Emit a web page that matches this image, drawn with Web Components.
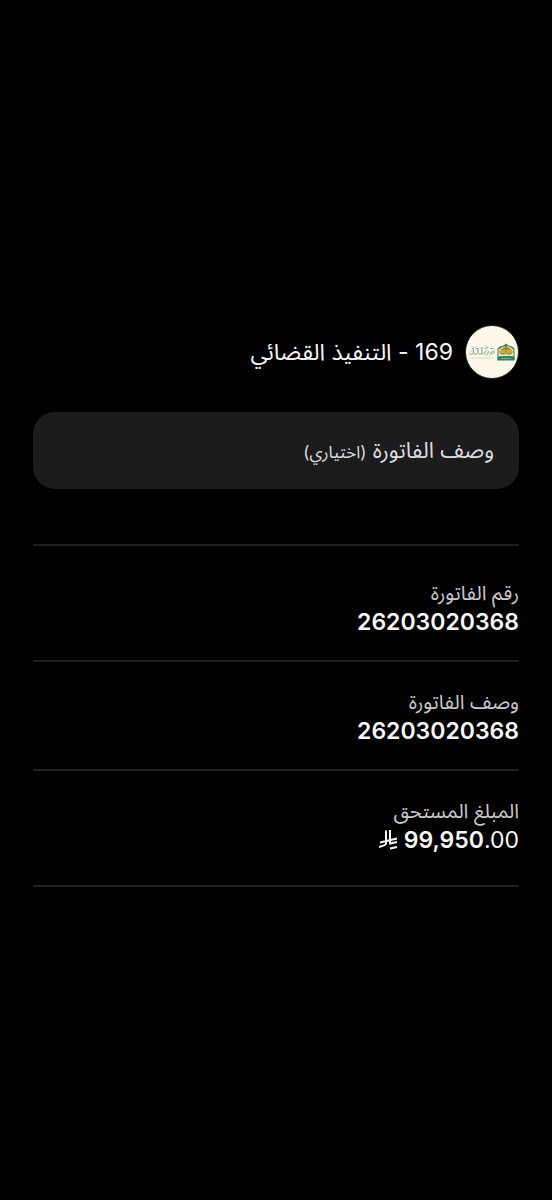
<!DOCTYPE html>
<html lang="ar" dir="rtl">
<head>
	<meta charset="utf-8">
	<meta name="viewport" content="width=device-width, initial-scale=1">
	<title>169 - التنفيذ القضائي</title>
	<style>
		body {
			margin: 0;
			min-height: 100vh;
			background: #000;
			color: #f7f7f7;
			font-family: Inter, "Noto Sans Arabic", "DejaVu Sans", sans-serif;
		}
	</style>
</head>
<body>
	<bill-page>
		<biller-header slot="header">169 - التنفيذ القضائي</biller-header>
		<note-field label="وصف الفاتورة" hint="(اختياري)"></note-field>
		<bill-details>
			<bill-row label="رقم الفاتورة">26203020368</bill-row>
			<bill-row label="وصف الفاتورة">26203020368</bill-row>
			<bill-row label="المبلغ المستحق"><riyal-amount whole="99,950" fraction=".00"></riyal-amount></bill-row>
		</bill-details>
	</bill-page>

	<script>
		class BillPage extends HTMLElement {
			constructor(){
				super();
				this.attachShadow({ mode: "open" });
				this.shadowRoot.innerHTML = `
					<style>
						:host {
							display: flex;
							flex-direction: column;
							box-sizing: border-box;
							min-height: 100vh;
							padding: 325px 33px 32px;
						}
						main {
							display: flex;
							flex-direction: column;
						}
						header {
							margin-bottom: 33px;
						}
					</style>
					<header><slot name="header"></slot></header>
					<main><slot></slot></main>
				`;
			}
		}
		customElements.define("bill-page", BillPage);

		class JusticeLogo extends HTMLElement {
			constructor(){
				super();
				this.attachShadow({ mode: "open" });
				this.shadowRoot.innerHTML = `
					<style>
						:host {
							display: block;
							width: 54px;
							height: 54px;
							flex: none;
						}
						svg {
							display: block;
						}
					</style>
					<svg viewBox="0 0 54 54" width="54" height="54" aria-hidden="true">
						<circle cx="27" cy="27" r="26.5" fill="#fdf8ea" stroke="#2a2825"/>
						<!-- calligraphy strokes -->
						<g fill="none" stroke="#6d9a88" stroke-width=".9" stroke-linecap="round">
							<path d="M4.500 28.500q2 2.200 4-.2v-4M9 29q3 .8 4-1.200v-4M14 29h3v-5M18.500 29q2-.4 2-3M21 30q2.500-.5 2.500-3.500M25 30q2-.8 2-3.500M28 29q2-1 1-3.500M7 24l1.500-1M11 23.500h2M16 23h1.500M20 23.500l3-1.200M26 23.500h2"/>
							<path stroke="#a8c0af" stroke-width=".6" d="M6 21.800h2M11 21.500h1M19 21h3M5 26h3M12 26l3-.8M21 25h2M24 28l4-1"/>
						</g>
						<path fill="none" stroke="#d8cda9" stroke-width="1" stroke-dasharray="1.300 .5" d="M5 33h24"/>
						<!-- emblem -->
						<path fill="#367f65" d="M32.500 35V23.500q2-2.500 6-3l2.500-2 2.500 2q4 .5 6 3V35z"/>
						<path fill="#f5e9bd" d="M33.500 31.500V24.500q7.500-7 15 0v7z"/>
						<path fill="#d3a63e" d="M34 28q0-3.500 3-4.500l4-3.300 4 3.300q3 1 3 4.500l-3 1.500h-8z"/>
						<path fill="none" stroke="#3c795a" stroke-width=".7" d="M41 19.500v8M37 24.500l4-1.500 4 1.500M35.500 28.500q2.500 1.500 4 0M42.500 28.500q2 1.500 4 0"/>
						<path fill="#2f8063" d="M32.500 32q8.500-2 17 0v3.500h-17z"/>
						<path fill="none" stroke="#b9cca5" stroke-width=".6" d="M36 33.500h10"/>
					</svg>
				`;
			}
		}
		customElements.define("justice-logo", JusticeLogo);

		class BillerHeader extends HTMLElement {
			constructor(){
				super();
				this.attachShadow({ mode: "open" });
				this.shadowRoot.innerHTML = `
					<style>
						:host {
							display: flex;
							align-items: center;
							gap: 12px;
						}
						h1 {
							margin: 0;
							font-size: 23px;
							line-height: 32px;
							font-weight: 400;
						}
					</style>
					<justice-logo></justice-logo>
					<h1><slot></slot></h1>
				`;
			}
		}
		customElements.define("biller-header", BillerHeader);

		class NoteField extends HTMLElement {
			constructor(){
				super();
				this.attachShadow({ mode: "open" });
				this.shadowRoot.innerHTML = `
					<style>
						:host {
							display: grid;
							align-items: center;
							min-height: 77px;
							border-radius: 22px;
							background: #1c1c1e;
							color: #dededf;
						}
						/* the label lies in the same cell as the input, like a placeholder */
						label, input {
							grid-area: 1 / 1;
						}
						label {
							padding: 0 25px;
							font-size: 22px;
							line-height: 32px;
							pointer-events: none;
						}
						small {
							font-size: 17px;
						}
						input {
							box-sizing: border-box;
							width: 100%;
							height: 100%;
							padding: 0 25px;
							border: 0;
							border-radius: inherit;
							background: none;
							color: inherit;
							font: inherit;
							font-size: 22px;
						}
						input:not(:placeholder-shown) + label {
							visibility: hidden;
						}
					</style>
					<input id="note" type="text" placeholder=" ">
					<label for="note"><span></span> <small></small></label>
				`;
			}
			connectedCallback(){
				this.shadowRoot.querySelector("span").textContent = this.getAttribute("label");
				this.shadowRoot.querySelector("small").textContent = this.getAttribute("hint");
			}
		}
		customElements.define("note-field", NoteField);

		class BillDetails extends HTMLElement {
			constructor(){
				super();
				this.attachShadow({ mode: "open" });
				this.shadowRoot.innerHTML = `
					<style>
						:host {
							display: block;
							margin-top: 55px;
							padding: 7px 0;
							border-top: 2px solid #202021;
							border-bottom: 2px solid #202021;
						}
						::slotted(:not(:last-child)) {
							border-bottom: 2px solid #202021;
						}
					</style>
					<slot></slot>
				`;
			}
		}
		customElements.define("bill-details", BillDetails);

		class BillRow extends HTMLElement {
			constructor(){
				super();
				this.attachShadow({ mode: "open" });
				this.shadowRoot.innerHTML = `
					<style>
						:host {
							display: block;
							padding: 26px 0 23px;
						}
						dl, dd {
							margin: 0;
						}
						dt {
							color: #c9c9c9;
							font-size: 20px;
							line-height: 28px;
						}
						dd {
							font-size: 23px;
							line-height: 30px;
							font-weight: 600;
						}
					</style>
					<dl>
						<dt></dt>
						<dd><slot></slot></dd>
					</dl>
				`;
			}
			connectedCallback(){
				this.shadowRoot.querySelector("dt").textContent = this.getAttribute("label");
			}
		}
		customElements.define("bill-row", BillRow);

		class RiyalAmount extends HTMLElement {
			constructor(){
				super();
				this.attachShadow({ mode: "open" });
				this.shadowRoot.innerHTML = `
					<style>
						:host {
							display: flex;
							align-items: center;
							gap: 6px;
						}
						bdi {
							direction: ltr;
						}
						.fraction {
							font-weight: 400;
						}
						svg {
							display: block;
						}
					</style>
					<bdi><span class="whole"></span><span class="fraction"></span></bdi>
					<svg viewBox="0 0 20 22" width="20" height="22" role="img" aria-label="ريال">
						<path fill="none" stroke="#f7f7f7" stroke-width="2" d="M8 1.500v13q-.5 2-7 3.500M12 1v13.500l7-1.500M2 13.500l17-4M12 19.500l7-1.500"/>
					</svg>
				`;
			}
			connectedCallback(){
				this.shadowRoot.querySelector(".whole").textContent = this.getAttribute("whole");
				this.shadowRoot.querySelector(".fraction").textContent = this.getAttribute("fraction");
			}
		}
		customElements.define("riyal-amount", RiyalAmount);
	</script>
</body>
</html>
